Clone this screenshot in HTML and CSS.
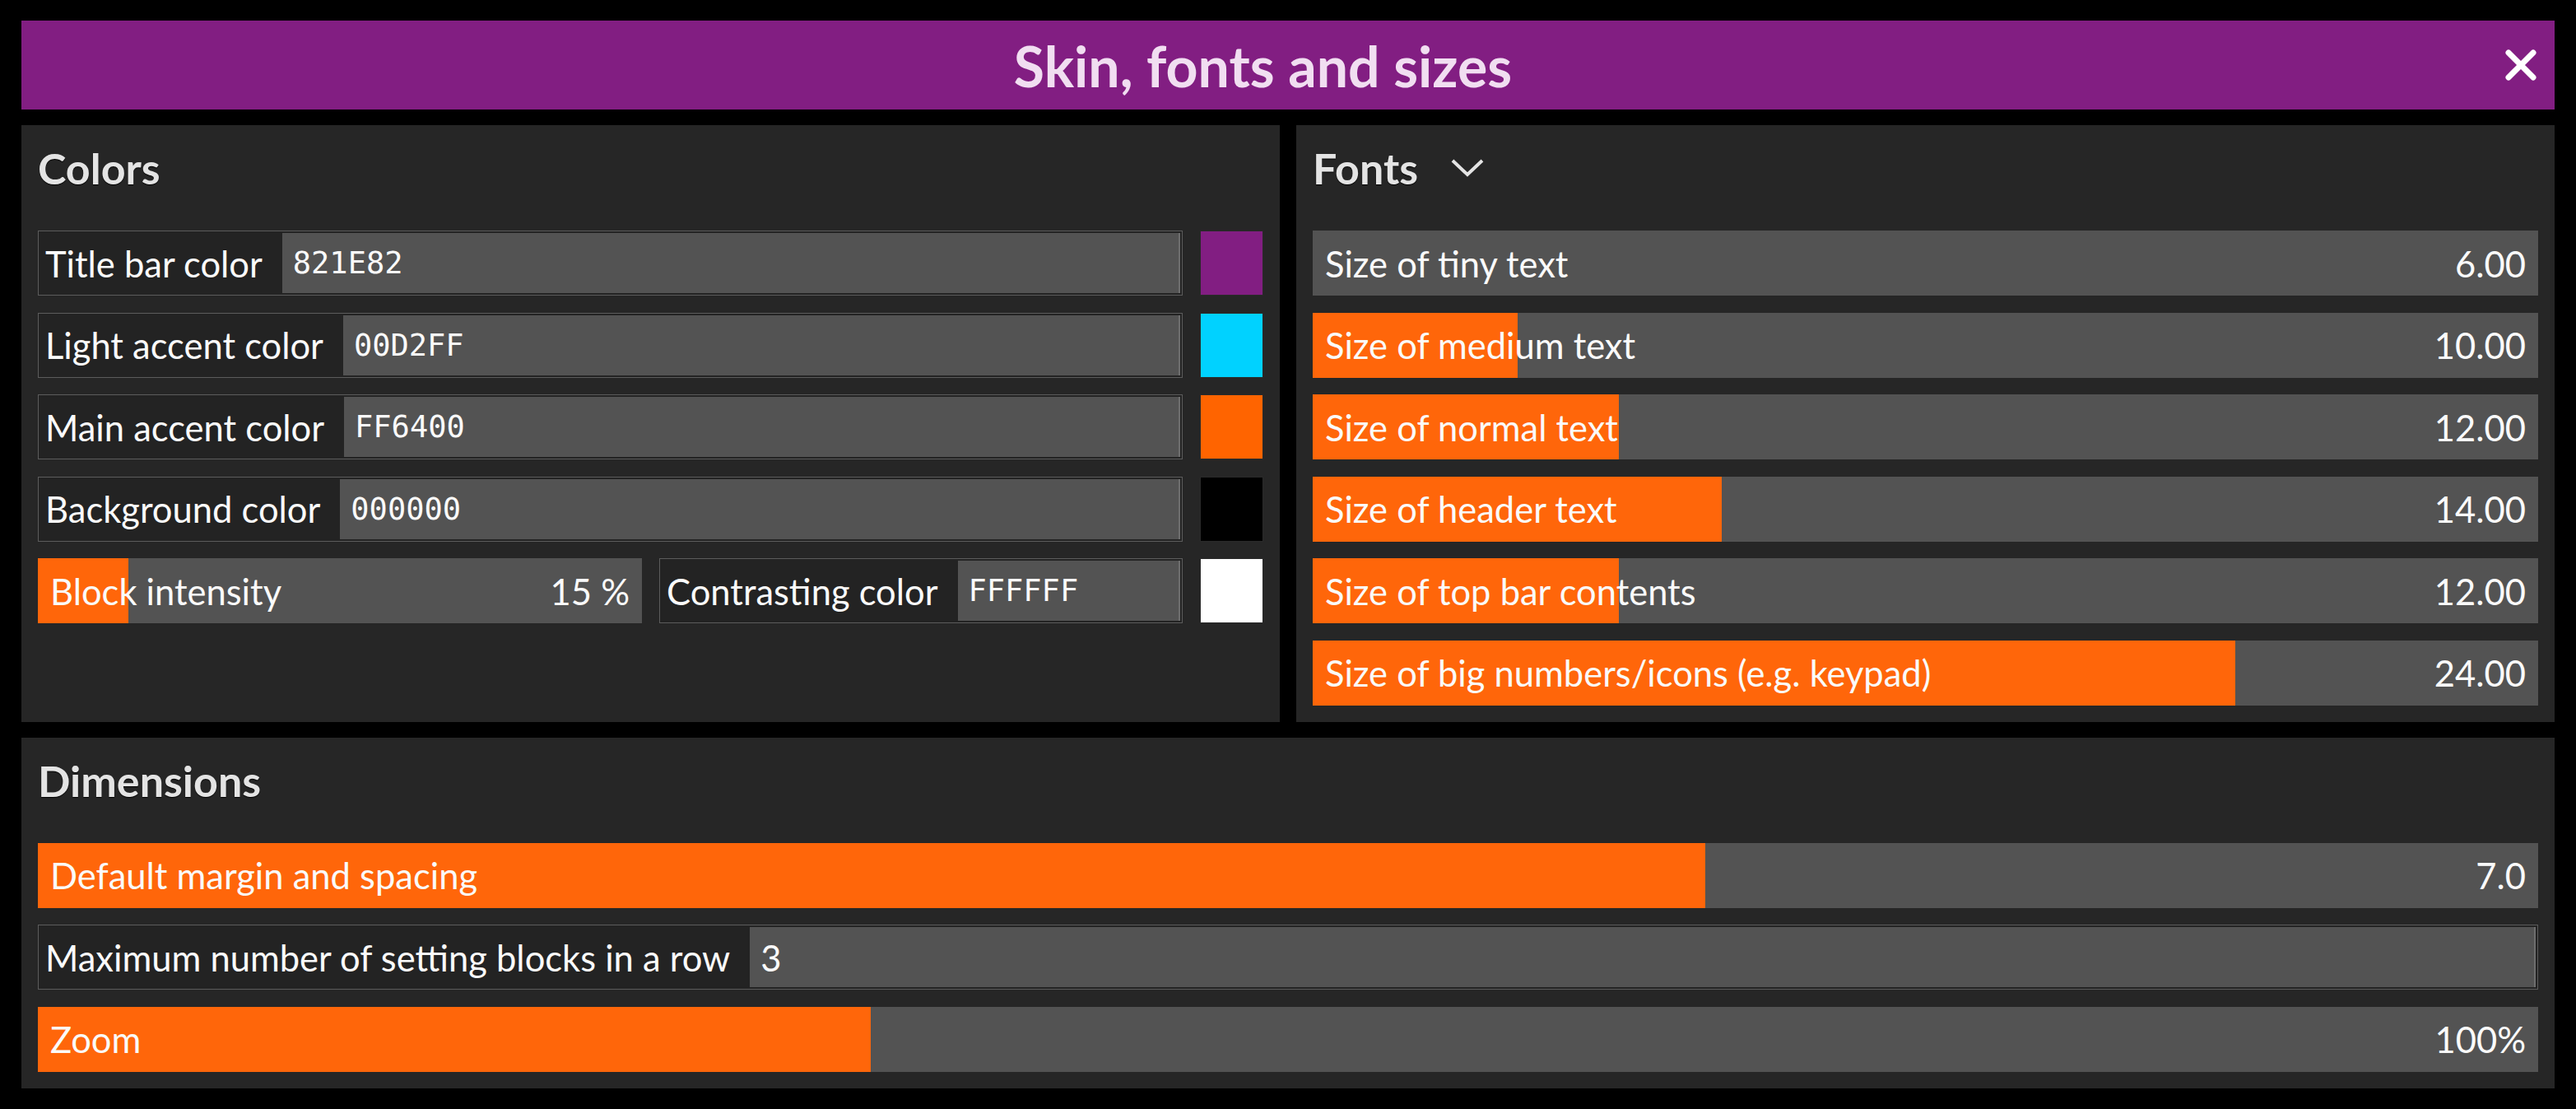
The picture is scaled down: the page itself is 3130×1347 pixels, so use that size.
FILE: index.html
```html
<!DOCTYPE html>
<html lang="en">
<head>
  <meta charset="UTF-8" />
  <title>Skin, fonts and sizes</title>
  <link rel="stylesheet" href="styles.css">
</head>
<body>
  <header class="titlebar">
    <h1>Skin, fonts and sizes</h1>
    <button class="close" aria-label="Close">
      <svg viewBox="0 0 40 40" width="40" height="40"><path d="M5 5 L35 35 M35 5 L5 35" /></svg>
    </button>
  </header>

  <div class="top-row">
    <section class="panel">
      <h2>Colors</h2>
      <div class="rows">
        <div class="color-row">
          <div class="field"><span class="label">Title bar color</span><span class="value mono">821E82</span></div>
          <span class="swatch" style="background:#821E82"></span>
        </div>
        <div class="color-row">
          <div class="field"><span class="label">Light accent color</span><span class="value mono">00D2FF</span></div>
          <span class="swatch" style="background:#00D2FF"></span>
        </div>
        <div class="color-row">
          <div class="field"><span class="label">Main accent color</span><span class="value mono">FF6400</span></div>
          <span class="swatch" style="background:#FF6400"></span>
        </div>
        <div class="color-row">
          <div class="field"><span class="label">Background color</span><span class="value mono">000000</span></div>
          <span class="swatch" style="background:#000000"></span>
        </div>
        <div class="color-row">
          <div class="slider intensity" style="--fill:15%"><span>Block intensity</span><span>15 %</span></div>
          <div class="field contrast"><span class="label">Contrasting color</span><span class="value mono">FFFFFF</span></div>
          <span class="swatch" style="background:#FFFFFF"></span>
        </div>
      </div>
    </section>

    <section class="panel">
      <h2>Fonts <svg class="chevron" viewBox="0 0 40 22" width="40" height="22"><path d="M2 2 L20 19 L38 2" /></svg></h2>
      <div class="rows">
        <div class="slider" style="--fill:0%"><span>Size of tiny text</span><span>6.00</span></div>
        <div class="slider" style="--fill:16.7%"><span>Size of medium text</span><span>10.00</span></div>
        <div class="slider" style="--fill:25%"><span>Size of normal text</span><span>12.00</span></div>
        <div class="slider" style="--fill:33.4%"><span>Size of header text</span><span>14.00</span></div>
        <div class="slider" style="--fill:25%"><span>Size of top bar contents</span><span>12.00</span></div>
        <div class="slider" style="--fill:75.3%"><span>Size of big numbers/icons (e.g. keypad)</span><span>24.00</span></div>
      </div>
    </section>
  </div>

  <section class="panel">
    <h2>Dimensions</h2>
    <div class="rows">
      <div class="slider" style="--fill:66.7%"><span>Default margin and spacing</span><span>7.0</span></div>
      <div class="field"><span class="label">Maximum number of setting blocks in a row</span><span class="value">3</span></div>
      <div class="slider" style="--fill:33.3%"><span>Zoom</span><span>100%</span></div>
    </div>
  </section>
</body>
</html>
```

FILE: styles.css
```css
* { margin: 0; padding: 0; box-sizing: border-box; }
body {
  background: #000;
  padding: 25px 26px 26px;
  display: flex;
  flex-direction: column;
  gap: 19px;
  font-family: 'Lato', 'Open Sans', sans-serif;
  color: #fafafa;
}
.titlebar {
  height: 108px;
  background: #821e82;
  display: flex;
  align-items: center;
  padding-right: 21px;
}
.titlebar h1 {
  flex: 1;
  text-align: center;
  font-size: 68px;
  font-weight: 700;
  color: #f1def1;
}
.close {
  width: 40px;
  height: 40px;
  background: none;
  border: none;
  display: flex;
}
.close path { stroke: #fff; stroke-width: 7; stroke-linecap: round; fill: none; }

.top-row {
  display: grid;
  grid-template-columns: 1fr 1fr;
  gap: 20px;
}
.panel {
  background: #262626;
  padding: 20px;
}
.panel h2 {
  height: 64px;
  line-height: 64px;
  font-size: 52px;
  font-weight: 700;
  color: #e4e4e4;
  text-shadow: 0 1px 1px #000;
  margin-bottom: 44px;
  display: flex;
  align-items: center;
  gap: 40px;
}
.chevron path { stroke: #e4e4e4; stroke-width: 4; fill: none; }

.rows {
  display: flex;
  flex-direction: column;
  gap: 20.5px;
}
.color-row {
  display: flex;
  gap: 21px;
  height: 79px;
}
.swatch {
  flex: 0 0 77px;
  border: 1px solid #2a2a2a;
}

.field, .slider {
  height: 79px;
  font-size: 43.5px;
  display: flex;
  align-items: center;
}
.color-row .field { flex: 1; min-width: 0; }
.field {
  background: #232323;
  border: 1px solid #5c5c5c;
}
.field .label {
  padding: 0 22px 0 8px;
  white-space: nowrap;
}
.field .value {
  flex: 1;
  align-self: stretch;
  margin: 2px;
  background: #535353;
  border-right: 2px solid #6e6e6e;
  padding-left: 13px;
  display: flex;
  align-items: center;
}
.mono {
  font-family: 'DejaVu Sans Mono', monospace;
  font-size: 37px;
}
.slider {
  justify-content: space-between;
  padding: 0 15px;
  white-space: nowrap;
  background: linear-gradient(to right, #ff660a var(--fill), #535353 var(--fill));
}
.color-row .intensity { flex: 0 0 49.3%; }
```
